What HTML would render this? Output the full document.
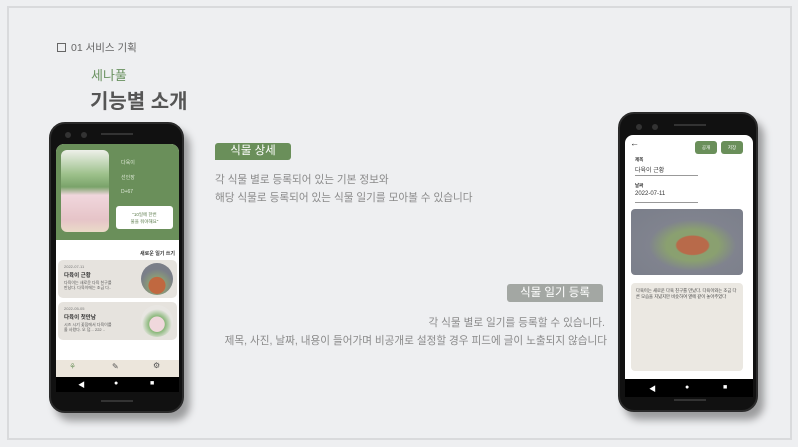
<!DOCTYPE html>
<html><head><meta charset="utf-8">
<style>
*{margin:0;padding:0;box-sizing:border-box}
body{width:798px;height:447px;background:#eeeff1;position:relative;overflow:hidden;font-family:"Liberation Sans","Noto Sans CJK KR",sans-serif}
.frame{position:absolute;left:7px;top:6px;width:785px;height:434px;border:2px solid #d9dadc}
.abs{position:absolute}
.phone{position:absolute;background:#111;border-radius:16px;border:2px solid #2a2a2a;box-shadow:6px 8px 8px rgba(0,0,0,.35)}
.screen{position:absolute;background:#fff;overflow:hidden;border-radius:8px 8px 0 0}
.nav{position:absolute;background:#000;color:#fff;font-size:7px}
.t{font-size:10.6px;color:#8a8a8a;white-space:nowrap}
</style></head><body>
<div class="frame"></div>
<div class="abs" style="left:57px;top:43px;width:9px;height:9px;border:1px solid #666"></div>
<div class="abs" style="left:71px;top:40px;font-size:10.5px;color:#666">01 서비스 기획</div>
<div class="abs" style="left:91px;top:65px;font-size:13px;color:#6a9160">세나풀</div>
<div class="abs" style="left:90px;top:85px;font-size:20px;font-weight:bold;color:#555">기능별 소개</div>

<!-- left phone -->
<div class="phone" style="left:49px;top:122px;width:135px;height:291px">
 <div class="abs" style="left:14px;top:8px;width:6px;height:6px;border-radius:50%;background:#333"></div>
 <div class="abs" style="left:30px;top:8px;width:6px;height:6px;border-radius:50%;background:#333"></div>
 <div class="abs" style="left:50px;top:9px;width:32px;height:2px;background:#333"></div>
 <div class="abs" style="left:50px;top:276px;width:32px;height:2px;background:#333"></div>
 <div class="screen" style="left:5px;top:20px;width:123px;height:248px">
  <div class="abs" style="left:0;top:0;width:123px;height:96px;background:#6a8f5a"></div>
  <div class="abs" style="left:5px;top:6px;width:48px;height:82px;border-radius:6px;background:linear-gradient(#eef0ea 0%,#9cc08a 30%,#7aa36a 45%,#f0d6dc 55%,#e6c4c8 85%,#eadbc8 100%)"></div>
  <div class="abs" style="left:65px;top:15px;font-size:5px;color:#dde8d6">다육이</div>
  <div class="abs" style="left:65px;top:30px;font-size:5px;color:#dde8d6">선인장</div>
  <div class="abs" style="left:65px;top:45px;font-size:5px;color:#dde8d6">D+67</div>
  <div class="abs" style="left:60px;top:62px;width:57px;height:23px;background:#fff;border-radius:3px;font-size:4.5px;color:#5a7a4a;text-align:center;padding-top:5px;line-height:7px">"10일에 한번<br>물을 줘야해요"</div>
  <div class="abs" style="right:4px;top:106px;font-size:5px;font-weight:bold;color:#333">새로운 일기 쓰기</div>
  <div class="abs" style="left:2px;top:116px;width:119px;height:38px;background:#e6e3de;border-radius:5px">
   <div class="abs" style="left:6px;top:4px;font-size:4px;color:#777">2022-07-11</div>
   <div class="abs" style="left:6px;top:11px;font-size:5.5px;font-weight:bold;color:#333">다육이 근황</div>
   <div class="abs" style="left:6px;top:20px;font-size:4px;color:#555;line-height:5px">다육이는 새로운 다육 친구를<br>만났다. 다육이에는 조금 다..</div>
   <div class="abs" style="right:4px;top:3px;width:32px;height:32px;border-radius:50%;background:radial-gradient(circle at 50% 70%,#c06840 0 30%,#8a9a78 32%,#7a7e88 60%)"></div>
  </div>
  <div class="abs" style="left:2px;top:158px;width:119px;height:38px;background:#e6e3de;border-radius:5px">
   <div class="abs" style="left:6px;top:4px;font-size:4px;color:#777">2022-05-05</div>
   <div class="abs" style="left:6px;top:11px;font-size:5.5px;font-weight:bold;color:#333">다육이 첫만남</div>
   <div class="abs" style="left:6px;top:20px;font-size:4px;color:#555;line-height:5px">시즈 시기 꽃집에서 다육이를<br>올 사왔다. 오 덥... 222 ..</div>
   <div class="abs" style="right:4px;top:3px;width:32px;height:32px;border-radius:50%;background:radial-gradient(circle at 50% 60%,#f0d8dc 0 30%,#8ab87a 32%,#e8e6e2 60%)"></div>
  </div>
  <div class="abs" style="left:0;top:216px;width:123px;height:17px;background:#ece6dc;font-size:3.5px;color:#666">
   <div class="abs" style="left:13px;top:2px;font-size:8px;color:#7a9a6a">⚘</div>
   <div class="abs" style="left:56px;top:2px;font-size:8px;color:#555">✎</div>
   <div class="abs" style="left:97px;top:1px;font-size:8px;color:#555">⚙</div>
  </div>
  <div class="nav" style="left:0;top:233px;width:123px;height:15px">
   <span class="abs" style="left:22px;top:3px">◀</span><span class="abs" style="left:58px;top:3px">●</span><span class="abs" style="left:94px;top:3px">■</span>
  </div>
 </div>
</div>

<!-- right phone -->
<div class="phone" style="left:618px;top:112px;width:140px;height:300px">
 <div class="abs" style="left:16px;top:10px;width:6px;height:6px;border-radius:50%;background:#333"></div>
 <div class="abs" style="left:32px;top:10px;width:6px;height:6px;border-radius:50%;background:#333"></div>
 <div class="abs" style="left:54px;top:10px;width:32px;height:2px;background:#333"></div>
 <div class="abs" style="left:54px;top:285px;width:32px;height:2px;background:#333"></div>
 <div class="screen" style="left:5px;top:21px;width:128px;height:262px">
  <div class="abs" style="left:5px;top:3px;font-size:9px;color:#222">←</div>
  <div class="abs" style="left:70px;top:6px;width:22px;height:13px;background:#6a8f5a;border-radius:3px;font-size:4.5px;color:#fff;text-align:center;line-height:13px">공개</div>
  <div class="abs" style="left:96px;top:6px;width:22px;height:13px;background:#6a8f5a;border-radius:3px;font-size:4.5px;color:#fff;text-align:center;line-height:13px">저장</div>
  <div class="abs" style="left:10px;top:22px;font-size:4.5px;font-weight:bold;color:#333">제목</div>
  <div class="abs" style="left:10px;top:30px;font-size:6px;color:#333">다육이 근황</div>
  <div class="abs" style="left:10px;top:40px;width:63px;height:1px;background:#999"></div>
  <div class="abs" style="left:10px;top:48px;font-size:4.5px;font-weight:bold;color:#333">날짜</div>
  <div class="abs" style="left:10px;top:56px;font-size:6px;color:#333">2022-07-11</div>
  <div class="abs" style="left:10px;top:67px;width:63px;height:1px;background:#999"></div>
  <div class="abs" style="left:6px;top:74px;width:112px;height:66px;border-radius:4px;background:radial-gradient(ellipse at 55% 55%,#b86a4a 0 18%,#8aa070 20% 30%,#80838e 50%,#7a7e8a)"></div>
  <div class="abs" style="left:6px;top:148px;width:112px;height:88px;border-radius:4px;background:#ebe8e2;padding:5px;font-size:4.3px;color:#444;line-height:5.5px">다육이는 새로운 다육 친구를 만났다. 다육이와는 조금 다른 모습을 지녔지만 비슷하여 옆에 같이 놓아주었다</div>
  <div class="nav" style="left:0;top:244px;width:128px;height:18px">
   <span class="abs" style="left:24px;top:5px">◀</span><span class="abs" style="left:60px;top:5px">●</span><span class="abs" style="left:98px;top:5px">■</span>
  </div>
 </div>
</div>

<!-- descriptions -->
<div class="abs" style="left:215px;top:143px;width:76px;height:17px;background:#6a8f5a;border-radius:3px 3px 3px 0;color:#fff;font-size:11.5px;text-align:center;line-height:17px">식물 상세</div>
<div class="abs t" style="left:215px;top:172px">각 식물 별로 등록되어 있는 기본 정보와</div>
<div class="abs t" style="left:215px;top:190px">해당 식물로 등록되어 있는 식물 일기를 모아볼 수 있습니다</div>

<div class="abs" style="left:507px;top:284px;width:96px;height:18px;background:#a3a7a3;border-radius:3px 3px 0 3px;color:#fff;font-size:11.5px;text-align:center;line-height:18px">식물 일기 등록</div>
<div class="abs t" style="right:193px;top:315px">각 식물 별로 일기를 등록할 수 있습니다.</div>
<div class="abs t" style="right:191px;top:333px">제목, 사진, 날짜, 내용이 들어가며 비공개로 설정할 경우 피드에 글이 노출되지 않습니다</div>
</body></html>
